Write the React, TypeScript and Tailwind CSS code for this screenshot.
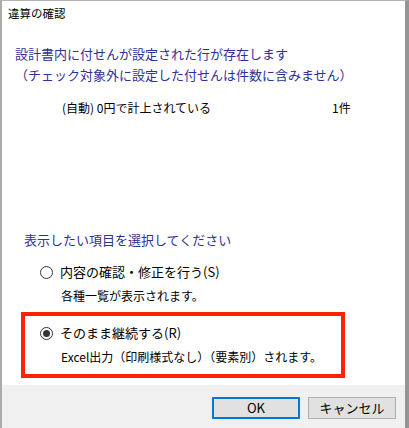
import React from 'react'

const font = { fontFamily: '"Noto Sans CJK JP", "Noto Sans", sans-serif' }

function Radio({ checked }: { checked?: boolean }) {
  return (
    <span className="w-[13px] h-[13px] rounded-full border border-[#333333] bg-white flex items-center justify-center shrink-0">
      {checked && <span className="w-[7px] h-[7px] rounded-full bg-[#333333]" />}
    </span>
  )
}

export default function App() {
  return (
    <div
      style={font}
      className="w-[409px] h-[428px] flex flex-col border-l-2 border-l-[#ababab] border-t border-t-[#b4b4b4] border-r-4 border-r-[#959595] bg-white text-black"
    >
      <div className="flex-1 bg-white">
        <div className="pl-[6px] pt-[4px] text-[11.5px] leading-[16px]">違算の確認</div>

        {/* warning message */}
        <div className="mt-[22px] pl-[13px] text-[13px] leading-[21px] text-[#30309a]">
          <div>設計書内に付せんが設定された行が存在します</div>
          <div>（チェック対象外に設定した付せんは件数に含みません）</div>
        </div>

        <div className="mt-[14px] flex text-[12px] leading-[18px]">
          <span className="pl-[60px] w-[330px]">(自動) 0円で計上されている</span>
          <span>1件</span>
        </div>

        <div className="mt-[113px] pl-[22px] text-[13px] leading-[20px] text-[#30309a]">
          表示したい項目を選択してください
        </div>

        <div className="mt-[12px] pl-[38px] flex items-center gap-[7px] text-[13px] leading-[20px]">
          <Radio />
          <span>内容の確認・修正を行う(S)</span>
        </div>
        <div className="mt-[5px] pl-[59px] text-[12px] leading-[18px]">各種一覧が表示されます。</div>

        <div className="mt-[7px] ml-[19px] w-[324px] h-[66px] border-[4px] border-[#ff2200]">
          <div className="pt-[7px] pl-[15px] flex items-center gap-[7px] text-[13px] leading-[20px]">
            <Radio checked />
            <span>そのまま継続する(R)</span>
          </div>
          <div className="mt-[5px] pl-[36px] text-[12px] leading-[18px]">
            Excel出力（印刷様式なし）（要素別）されます。
          </div>
        </div>
      </div>

      {/* footer buttons */}
      <div className="h-[43px] bg-[#f0f0f0] flex justify-end items-start gap-[8px] pt-[12px] pr-[9px]">
        <button className="w-[88px] h-[22px] border-2 border-[#0078d7] bg-[#e1e1e1] text-[13px] leading-[18px]">
          OK
        </button>
        <button className="w-[88px] h-[22px] border border-[#adadad] bg-[#e1e1e1] text-[13px] leading-[20px]">
          キャンセル
        </button>
      </div>
    </div>
  )
}
